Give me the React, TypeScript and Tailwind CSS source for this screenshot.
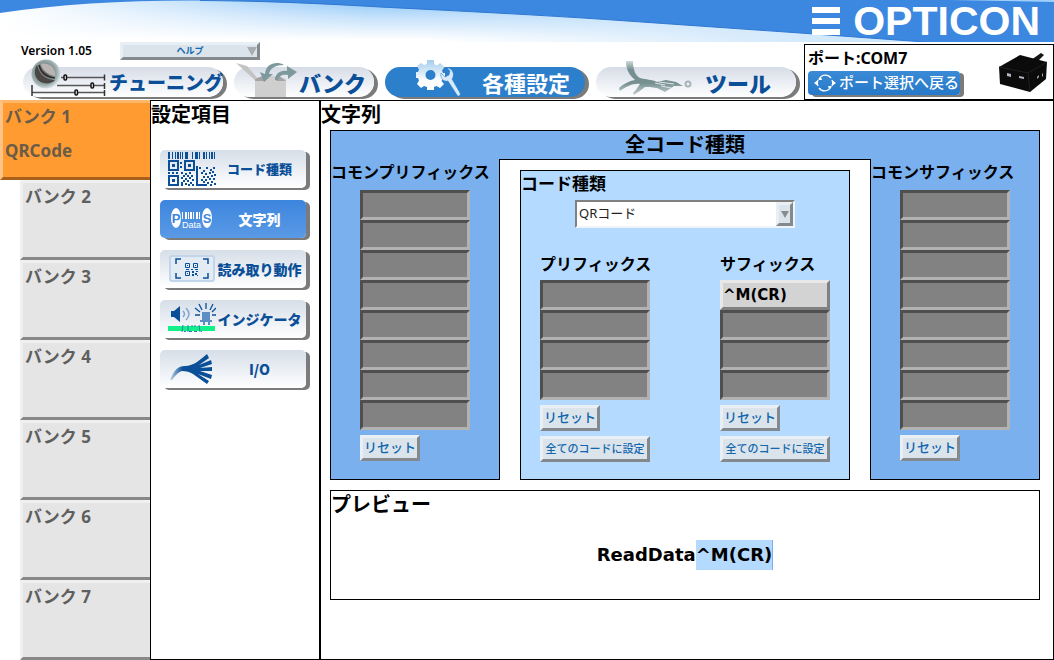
import type { ReactNode } from "react";

const BLUE = "#0a4f98";

function Banner() {
  return (
    <svg
      aria-hidden="true"
      className="absolute inset-x-0 top-0 h-[42px] w-full"
      viewBox="0 0 1054 42"
      preserveAspectRatio="none"
    >
      <defs>
        <linearGradient id="sky" x1="0" y1="0" x2="0" y2="1">
          <stop offset="0" stopColor="#8cc6f8" />
          <stop offset="0.4" stopColor="#c4e1fb" />
          <stop offset="0.95" stopColor="#ffffff" />
        </linearGradient>
        <linearGradient id="skyRight" x1="0" y1="0" x2="1" y2="0">
          <stop offset="0.4" stopColor="#cfe7fb" stopOpacity="0" />
          <stop offset="0.8" stopColor="#cfe7fb" />
        </linearGradient>
        <linearGradient id="skyLeft" x1="0" y1="0" x2="1" y2="0">
          <stop offset="0" stopColor="#ffffff" />
          <stop offset="0.35" stopColor="#ffffff" stopOpacity="0" />
        </linearGradient>
      </defs>
      <rect width="1054" height="42" fill="url(#sky)" />
      <rect width="1054" height="42" fill="url(#skyRight)" />
      <rect width="1054" height="42" fill="url(#skyLeft)" />
      <path
        d="M0 0V13C60 4 130 0 200 0.500C270 1 330 4 380 7C460 11 540 15 613 20L800 33L925 42H1054V0Z"
        fill="#3c87df"
      />
      <path
        d="M200 0.500C270 1 330 4 380 7C460 11 540 15 613 20L800 33L925 42"
        fill="none"
        stroke="#2f78d2"
        strokeWidth="1"
      />
      <path d="M950 0L1054 2V0Z" fill="#9fd0fa" />
    </svg>
  );
}

function TuningIcon() {
  return (
    <svg aria-hidden="true" className="h-[38px] w-[76px] shrink-0" viewBox="0 0 76 38">
      <defs>
        <radialGradient id="lens" cx="0.45" cy="0.45" r="0.55">
          <stop offset="0" stopColor="#6f6a69" />
          <stop offset="0.55" stopColor="#7f8b8b" />
          <stop offset="0.8" stopColor="#9fb1b1" />
          <stop offset="1" stopColor="#d5e0e2" />
        </radialGradient>
      </defs>
      <g stroke="#55565a" strokeWidth="1.500">
        <path d="M30 18.500H73M26 26.500H73M1 33.500H73" />
        <path d="M1 26V37M73.500 15.500V21.500M73.500 24V30M73.500 31V37" stroke="#333" />
      </g>
      <circle cx="15" cy="15" r="14.500" fill="url(#lens)" />
      <path d="M6 6C9 16 13 20 24 21C20 26 9 26 5 18C3 13 4 9 6 6Z" fill="#4a4646" />
      <path d="M10 5C18 3 25 9 24 17C18 16 11 12 10 5Z" fill="#b9b4b2" />
      <path d="M8 6C10 14 15 18 24 19" fill="none" stroke="#2e2b2b" strokeWidth="1.500" />
      <g fill="#fff" stroke="#111" strokeWidth="1.500">
        <rect x="33" y="16" width="2.500" height="5" rx="1" />
        <rect x="60" y="24" width="2.500" height="5" rx="1" />
        <rect x="44" y="31" width="2.500" height="5" rx="1" />
      </g>
    </svg>
  );
}

function BankIcon() {
  return (
    <svg aria-hidden="true" className="h-[36px] w-[62px] shrink-0" viewBox="0 0 62 36">
      <path d="M0 2L11 5L23 19L20 20Z" fill="#c3c3c3" />
      <path d="M19 17L27 15H43L50 18V36H19Z" fill="#cfcfcf" />
      <path d="M19 18L27 15L30 20H19ZM43 15L50 20H40Z" fill="#a3a3a3" />
      <path d="M48 4C41 0 30 2 29 13L24 11L28 21L37 13L33 13C34 7 40 4 48 4Z" fill="#7d999b" />
      <path d="M39 19C39 13 44 9 51 10V5L61 11L52 18V14C46 13 43 15 42 19Z" fill="#7d999b" />
    </svg>
  );
}

function GearIcon() {
  return (
    <svg aria-hidden="true" className="h-[37px] w-[47px] shrink-0" viewBox="0 0 47 37">
      <defs>
        <linearGradient id="gear" x1="0" y1="0" x2="0" y2="1">
          <stop offset="0" stopColor="#a4cdee" />
          <stop offset="0.700" stopColor="#ffffff" />
        </linearGradient>
      </defs>
      <path
        fillRule="evenodd"
        fill="url(#gear)"
        d="M12 0H19V4L22 5.500L25 3L29.500 7L27 10.500L28 13H30V18H28L26.500 21L29 24L25 28L21.500 26L19 27V30H12V27L9 26L6 28L2 24L4 20.500L3 18H1V12H3L4 9.500L2 6L6 3L9 5L12 4ZM15.500 10A5 5 0 1 0 15.500 20A5 5 0 1 0 15.500 10Z"
      />
      <path
        fill="#d8eafa"
        stroke="#2b7fcb"
        strokeWidth="0.500"
        d="M32 8C38 8 40 15 37 19L45 33C46 36 43 37 42 35L33 21C28 22 25 18 26 13L30 17L34 15L35 11Z"
      />
    </svg>
  );
}

function ToolIcon() {
  return (
    <svg aria-hidden="true" className="h-[36px] w-[74px] shrink-0" viewBox="0 0 74 36">
      <defs>
        <linearGradient id="wire" x1="0" y1="0" x2="0" y2="1">
          <stop offset="0" stopColor="#d0d8da" />
          <stop offset="0.250" stopColor="#769092" />
          <stop offset="0.650" stopColor="#769092" />
          <stop offset="1" stopColor="#c5d0d1" />
        </linearGradient>
      </defs>
      <path
        fill="url(#wire)"
        d="M7 0H14C14 8 16 14 21 17C27 19 33 18 38 21L47 19L57 21L64 25L55 25L46 31L38 27C32 26 29 26 26 26C22 29 18 32 15 34L14 32C17 29 19 26 21 23C14 22 7 26 1 30L0 27C4 23 10 20 16 19C10 14 7 8 7 0Z"
      />
      <path d="M40 21L55 23M42 25L52 27M36 22L46 24" stroke="#dfe6e8" strokeWidth="1" />
      <circle cx="69" cy="23" r="2.500" fill="none" stroke="#a9b5b8" strokeWidth="2" />
    </svg>
  );
}

function Finder({ x, y }: { x: number; y: number }) {
  return (
    <g>
      <rect x={x + 1} y={y + 1} width="9" height="9" fill="none" strokeWidth="2" />
      <rect x={x + 4} y={y + 4} width="3" height="3" stroke="none" />
    </g>
  );
}

function CodeIcon() {
  const bars = [0, 4, 7, 9, 12, 14, 17, 19, 24, 27, 29, 31, 35, 38, 41, 43, 46];
  const cells = [
    [12, 10], [12, 14], [0, 20], [4, 20], [8, 20], [13, 20], [17, 21], [21, 20], [15, 23], [19, 23],
    [23, 23], [13, 25], [17, 26], [21, 25], [24, 27], [15, 28], [19, 28], [13, 30], [22, 30], [17, 31],
    [24, 32], [13, 32], [20, 32],
    [31, 15], [35, 18], [38, 15], [42, 17], [45, 15], [33, 20], [37, 21], [41, 20], [44, 19], [46, 22],
    [35, 24], [39, 24], [43, 23], [33, 27], [37, 27], [41, 26], [45, 26], [35, 29], [39, 30], [43, 29],
    [42, 32], [46, 31],
  ];
  return (
    <svg aria-hidden="true" className="h-[34px] w-[48px]" viewBox="0 0 48 34" fill={BLUE} stroke={BLUE}>
      <g stroke="none">
        {bars.map((x, i) => (
          <rect key={x} x={x} y="0" width={i % 3 === 0 ? 2 : 1} height="7" />
        ))}
        {cells.map(([x, y]) => (
          <rect key={`${x}-${y}`} x={x} y={y} width="2" height="2" />
        ))}
        <rect x="28" y="14" width="2" height="20" />
        <rect x="28" y="32" width="11" height="2" />
      </g>
      <Finder x={0} y={8} />
      <Finder x={16} y={8} />
      <Finder x={0} y={23} />
    </svg>
  );
}

function StringIcon() {
  return (
    <svg aria-hidden="true" className="h-[24px] w-[42px]" viewBox="0 0 42 24" fill="#fff">
      <ellipse cx="5" cy="11" rx="5" ry="10" />
      <ellipse cx="36" cy="11" rx="5" ry="10" />
      {[11, 14, 17, 19, 22, 25, 28].map((x, i) => (
        <rect key={x} x={x} y="5" width={i % 2 ? 2 : 1} height="7" />
      ))}
      <g fontFamily="Liberation Sans, sans-serif" textAnchor="middle">
        <text x="5" y="16" fontSize="13" fontWeight="700" fill="#3f86dc">P</text>
        <text x="36" y="16" fontSize="13" fontWeight="700" fill="#3f86dc">S</text>
        <text x="20.500" y="21" fontSize="9">Data</text>
      </g>
    </svg>
  );
}

function ReadIcon() {
  return (
    <svg aria-hidden="true" className="h-[28px] w-[46px]" viewBox="0 0 46 28">
      <rect x="1" y="1" width="44" height="25" rx="2" fill="#e3ebf5" stroke="#c3d5ea" strokeWidth="2" />
      <g fill="none" stroke={BLUE} strokeWidth="1.500">
        <path d="M7 9V4H12M34 4H39V9M39 18V23H34M12 23H7V18" />
      </g>
      <g fill="none" stroke={BLUE} strokeWidth="1">
        <path d="M16.500 8.500H20.500V12.500H16.500ZM24.500 8.500H28.500V12.500H24.500ZM16.500 16.500H20.500V20.500H16.500Z" />
      </g>
      <g fill={BLUE}>
        <rect x="18" y="10" width="1" height="1" />
        <rect x="26" y="10" width="1" height="1" />
        <rect x="18" y="18" width="1" height="1" />
        <rect x="22" y="14" width="2" height="1" />
        <rect x="26" y="14" width="3" height="1" />
        <rect x="23" y="16" width="2" height="2" />
        <rect x="26" y="18" width="2" height="2" />
        <rect x="27" y="16" width="2" height="1" />
        <rect x="23" y="19" width="2" height="2" />
        <rect x="28" y="20" width="1" height="1" />
        <rect x="17" y="14" width="3" height="1" />
      </g>
    </svg>
  );
}

function IndicatorIcon() {
  return (
    <svg aria-hidden="true" className="h-[32px] w-[48px]" viewBox="0 0 48 32">
      <path d="M3 8H6L12 3V19L6 14H3Z" fill={BLUE} />
      <path d="M15 8C17 10 17 12 15 14M18 5C22 9 22 13 18 17" fill="none" stroke="#7fa6cf" strokeWidth="1.500" />
      <path d="M34 9H42V17H44V19H32V17H34Z" fill="#5c8ec4" />
      <path d="M35 19H37V22H35ZM40 19H42V22H40Z" fill="#5c8ec4" />
      <path
        d="M38 0V6M31 1L34 7M45 1L42 7M27 5L32 9M48 5L44 9M27 12H32M48 12H44"
        stroke={BLUE}
        strokeWidth="1.300"
      />
      <rect x="0" y="23" width="47" height="5" fill="#12f08a" />
      <path
        d="M15 22L14 29M20 22V29M24 22V24M27 22V24M31 22L32 29M16 28.500H18M21 28.500H24M26 28.500H29M33 28.500H34"
        stroke="#2d7fb0"
        strokeWidth="1"
      />
    </svg>
  );
}

function CableIcon() {
  return (
    <svg aria-hidden="true" className="h-[30px] w-[44px]" viewBox="0 0 44 30">
      <defs>
        <linearGradient id="cable" x1="0" y1="0" x2="1" y2="0">
          <stop offset="0" stopColor="#c5d5e8" />
          <stop offset="0.300" stopColor={BLUE} />
          <stop offset="1" stopColor={BLUE} />
        </linearGradient>
      </defs>
      <path
        d="M0 26C4 16 8 12 15 12C23 12 29 7 37 0L39 4L29 11L41 6L42 10L30 14L42 13V17L30 17L42 21L41 25L28 20L39 27L37 30L23 20C20 18 16 17 12 17C8 18 5 22 2 26Z"
        fill="url(#cable)"
      />
    </svg>
  );
}

function SwapIcon() {
  return (
    <svg aria-hidden="true" className="h-[18px] w-[24px] shrink-0" viewBox="0 0 24 18">
      <path
        d="M6 5C9 0 15 0 18 4M18 13C15 18 9 18 6 14M5 6C4 8 4 10 5 12M19 6C20 8 20 10 19 12"
        fill="none"
        stroke="#fff"
        strokeWidth="1.300"
      />
      <path d="M1 9L5 6V12ZM23 9L19 6V12ZM5 6L9 6L8 3ZM19 12L15 12L16 15Z" fill="#fff" />
    </svg>
  );
}

function ScannerPicture() {
  return (
    <svg aria-hidden="true" className="h-[42px] w-[52px] shrink-0" viewBox="0 0 52 42">
      <path d="M34 9L44 2L47 4L40 11Z" fill="#151515" />
      <path d="M2 16L23 4L50 11L49 28L33 41L3 33Z" fill="#0b0b0b" />
      <path d="M2 16L31 22L50 11M31 22L33 41" fill="none" stroke="#1f1f1f" />
      <path d="M10 22L14 23V26L10 25ZM22 25L27 26V28L22 27Z" fill="#b4b7c2" />
      <path d="M40 26L42 24V26L40 28ZM45 23L46 22V25L45 26Z" fill="#a5a8b0" />
    </svg>
  );
}

function NavPill({
  label,
  icon,
  active,
  layout,
  small,
}: {
  label: string;
  icon: ReactNode;
  active?: boolean;
  layout: string;
  small?: boolean;
}) {
  return (
    <button
      type="button"
      className={`flex h-[30px] min-w-0 items-end rounded-full whitespace-nowrap shadow-[4px_2px_0_#7b7b7b] ${layout} ${
        active ? "bg-[#2b7fcb] text-white" : "bg-linear-to-b from-[#d6dce7] to-white text-[#0a4f98]"
      }`}
    >
      {icon}
      <span
        className={`font-['Noto_Sans_CJK_JP',sans-serif] leading-[30px] ${
          small ? "text-[19px] font-black" : active ? "text-[22px] font-bold" : "text-[22px] font-black"
        }`}
      >
        {label}
      </span>
    </button>
  );
}

function SettingButton({
  label,
  icon,
  active,
  size = "text-[14px]",
}: {
  label: string;
  icon: ReactNode;
  active?: boolean;
  size?: string;
}) {
  return (
    <button
      type="button"
      className={`flex h-[38px] w-full items-center rounded-[5px] pr-[4px] pl-[7px] shadow-[4px_2px_0_#7b7b7b] ${
        active ? "bg-linear-to-b from-[#3c85dd] to-[#5a9ae6] text-white" : "bg-linear-to-b from-[#d6dee8] to-white text-[#0a4f98]"
      }`}
    >
      <span className="flex w-[50px] shrink-0 justify-center">{icon}</span>
      <span className={`flex-1 text-center font-['Noto_Sans_CJK_JP',sans-serif] font-black whitespace-nowrap ${size}`}>
        {label}
      </span>
    </button>
  );
}

const raised =
  "border-3 border-t-[#e9f0f5] border-l-[#e9f0f5] border-r-[#83898d] border-b-[#83898d] bg-[#dbe4eb] text-[#1166ae]";

function SmallButton({ children, wide }: { children: string; wide?: boolean }) {
  return (
    <button
      type="button"
      className={`mt-[5px] flex h-[26px] items-center justify-center font-medium whitespace-nowrap ${raised} ${
        wide ? "w-[110px] text-[11px]" : "w-[60px] text-[13px]"
      }`}
    >
      {children}
    </button>
  );
}

function Slots({ name, count, values = [] }: { name: string; count: number; values?: string[] }) {
  return (
    <div className="flex w-[110px] flex-col">
      {Array.from({ length: count }, (_, i) => (
        <button
          key={i}
          type="button"
          aria-label={`${name} ${i + 1}`}
          className={`h-[30px] border-3 text-left font-['DejaVu_Sans',sans-serif] text-[15px] leading-[22px] font-bold ${
            values[i]
              ? "border-t-[#e8e8e8] border-r-[#808080] border-b-[#808080] border-l-[#e8e8e8] bg-[#d3d3d3]"
              : "border-t-[#4f4f4f] border-r-[#b2b2b2] border-b-[#b2b2b2] border-l-[#4f4f4f] bg-[#828282]"
          }`}
        >
          {values[i]}
        </button>
      ))}
    </div>
  );
}

function CommonColumn({ title }: { title: string }) {
  return (
    <section className="min-w-0 border-b border-black pt-px">
      <h3 className="mb-[6px] text-[16px] leading-[24px] font-bold whitespace-nowrap">{title}</h3>
      <div className="mx-auto w-[110px]">
        <Slots name={title} count={8} />
        <SmallButton>リセット</SmallButton>
      </div>
    </section>
  );
}

function AffixColumn({ title, values }: { title: string; values?: string[] }) {
  return (
    <section className="w-[110px]">
      <h4 className="text-[16px] leading-[32px] font-bold whitespace-nowrap">{title}</h4>
      <Slots name={title} count={4} values={values} />
      <SmallButton>リセット</SmallButton>
      <SmallButton wide>全てのコードに設定</SmallButton>
    </section>
  );
}

export default function App() {
  return (
    <div className="w-full bg-white font-['Noto_Sans','Noto_Sans_CJK_JP',sans-serif] text-black">
      <header className="relative">
        <Banner />
        <div className="relative flex h-[42px] items-center justify-end gap-[13px] pr-[14px]">
          <div aria-hidden="true" className="flex w-[28px] flex-col gap-[5px]">
            <span className="h-[6px] bg-white" />
            <span className="h-[6px] bg-white" />
            <span className="h-[6px] bg-white" />
          </div>
          <div className="font-['Liberation_Sans',sans-serif] text-[41px] leading-[42px] font-bold text-white">OPTICON</div>
        </div>
        <div className="relative flex">
          <div className="min-w-0 flex-1">
            <div className="flex items-center">
              <p className="w-[120px] pl-[21px] text-[12px] leading-[16px] font-semibold">Version 1.05</p>
              <button
                type="button"
                className={`flex h-[18px] w-[140px] items-center pl-[10px] text-[9px] leading-[12px] font-bold ${raised}`}
              >
                <span className="flex-1 text-center">ヘルプ</span>
                <svg aria-hidden="true" className="h-[9px] w-[10px]" viewBox="0 0 10 9">
                  <path d="M0 0H10L5 9Z" fill="#a9adb2" />
                </svg>
              </button>
            </div>
            <nav className="mt-[7px] grid grid-cols-[200fr_140fr_200fr_200fr] gap-[11px] pr-[8px] pl-[23px]">
              <NavPill label="チューニング" icon={<TuningIcon />} layout="gap-[2px] pl-[8px]" small />
              <NavPill label="バンク" icon={<BankIcon />} layout="gap-px pl-[2px]" />
              <NavPill label="各種設定" icon={<GearIcon />} layout="gap-[20px] pl-[30px]" active />
              <NavPill label="ツール" icon={<ToolIcon />} layout="gap-[12px] pl-[23px]" />
            </nav>
          </div>
          <section className="mt-[2px] flex h-[56px] w-[250px] items-center justify-between border border-black pr-[4px]">
            <div className="pl-[3px]">
              <p className="text-[16px] leading-[24px] font-bold">ポート:COM7</p>
              <button
                type="button"
                className="mt-px mb-[4px] flex h-[24px] w-[152px] items-center gap-[2px] rounded-[4px] bg-linear-to-b from-[#3a8ad6] to-[#2679c8] pl-[5px] text-[15px] leading-[23px] font-medium whitespace-nowrap text-white shadow-[4px_2px_0_#7b7b7b]"
              >
                <SwapIcon />
                ポート選択へ戻る
              </button>
            </div>
            <ScannerPicture />
          </section>
        </div>
      </header>

      <div className="flex">
        <aside className="flex w-[150px] shrink-0 flex-col items-end">
          <button
            type="button"
            className="flex h-[80px] w-full flex-col border-t-3 border-b-3 border-l-3 border-t-[#ffb869] border-b-[#a8611a] border-l-[#ffc287] bg-[#ff9b30] pl-[2px] text-left text-[17px] leading-[28px] font-bold text-[#6b5b49]"
          >
            <span>バンク 1</span>
            <span className="mt-[6px]">QRCode</span>
          </button>
          {[2, 3, 4, 5, 6, 7].map((n) => (
            <button
              key={n}
              type="button"
              className="flex h-[80px] w-[130px] items-start border-t-3 border-b-3 border-l-3 border-t-[#f0f0f0] border-b-[#888888] border-l-[#f0f0f0] bg-[#e5e5e5] pl-[2px] text-[17px] leading-[28px] font-bold text-[#5f5f5f]"
            >
              バンク {n}
            </button>
          ))}
        </aside>

        <section className="w-[170px] shrink-0 border border-black">
          <h2 className="text-[20px] leading-[28px] font-bold">設定項目</h2>
          <div className="mt-[21px] flex flex-col gap-[12px] pr-[13px] pl-[9px]">
            <SettingButton label="コード種類" icon={<CodeIcon />} size="text-[13px]" />
            <SettingButton label="文字列" icon={<StringIcon />} active />
            <SettingButton label="読み取り動作" icon={<ReadIcon />} />
            <SettingButton label="インジケータ" icon={<IndicatorIcon />} />
            <SettingButton label="I/O" icon={<CableIcon />} />
          </div>
        </section>

        <main className="min-w-0 flex-1 border border-black">
          <h2 className="mb-px text-[20px] leading-[28px] font-bold">文字列</h2>
          <div className="flex flex-col gap-[10px] pr-[13px] pl-[9px]">
            <div className="border-x border-t border-black bg-[#7ab0ee]">
              <h2 className="text-center text-[20px] leading-[28px] font-bold">全コード種類</h2>
              <div className="grid grid-cols-[168fr_372fr_168fr]">
                <CommonColumn title="コモンプリフィックス" />
                <div className="border-x border-t border-black bg-white px-[20px] pt-[10px]">
                  <div className="h-full border border-black bg-[#b4daff] pb-[17px]">
                    <label htmlFor="code-type" className="block text-[17px] leading-[25px] font-bold">
                      コード種類
                    </label>
                    <div className="relative mx-auto mt-[4px] w-[220px]">
                      <select
                        id="code-type"
                        className="block h-[28px] w-full appearance-none border-2 border-t-[#808080] border-r-[#eef4fa] border-b-[#eef4fa] border-l-[#808080] bg-white pl-[2px] text-[13px] text-[#222]"
                      >
                        <option>QRコード</option>
                      </select>
                      <span
                        className={`pointer-events-none absolute top-[2px] right-[2px] flex h-[24px] w-[17px] items-center justify-center ${raised}`}
                      >
                        <svg aria-hidden="true" className="h-[7px] w-[8px]" viewBox="0 0 8 7">
                          <path d="M0 0H8L4 7Z" fill="#888d92" />
                        </svg>
                      </span>
                    </div>
                    <div className="mt-[20px] flex justify-between px-[19px]">
                      <AffixColumn title="プリフィックス" />
                      <AffixColumn title="サフィックス" values={["^M(CR)"]} />
                    </div>
                  </div>
                </div>
                <CommonColumn title="コモンサフィックス" />
              </div>
            </div>

            <section className="h-[110px] border border-black">
              <h2 className="text-[20px] leading-[28px] font-bold">プレビュー</h2>
              <p className="mt-[21px] flex justify-center font-['DejaVu_Sans',sans-serif] text-[18px] leading-[30px] font-bold">
                <span>ReadData</span>
                <mark className="border-r border-[#7ab0ee] bg-[#b4daff] text-black">^M(CR)</mark>
              </p>
            </section>
          </div>
        </main>
      </div>
    </div>
  );
}
